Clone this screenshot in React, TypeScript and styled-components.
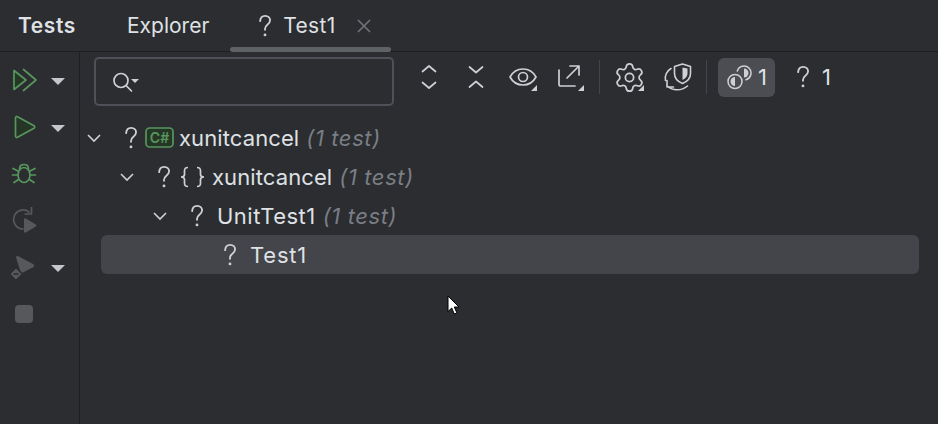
import React from 'react';
import styled, { createGlobalStyle } from 'styled-components';
import { Settings } from 'lucide-react';

const Global = createGlobalStyle`
  html, body { margin: 0; padding: 0; background: #2b2d30; }
  body { font-family: 'Inter', 'Noto Sans', sans-serif; overflow: hidden; }
`;

const Window = styled.div`
  position: relative;
  width: 938px;
  height: 424px;
  background: #2b2d30;
  color: #dfe1e5;
  display: flex;
  flex-direction: column;
  overflow: hidden;
`;

const TabBar = styled.div`
  height: 51px;
  flex: none;
  display: flex;
  align-items: stretch;
  padding-left: 18px;
  border-bottom: 1px solid #1e1f22;
  font-size: 21px;
`;

const ToolTitle = styled.div`
  font-weight: 600;
  width: 88px;
  display: flex;
  align-items: center;
  letter-spacing: 0.6px;
`;

const Tab = styled.div<{ $active?: boolean }>`
  display: flex;
  align-items: center;
  padding: 0 ${(p) => (p.$active ? '20px' : '21px')} 0 ${(p) => (p.$active ? '27px' : '21px')};
  position: relative;
  gap: 10px;
  &::after {
    content: '';
    display: ${(p) => (p.$active ? 'block' : 'none')};
    position: absolute;
    left: 0;
    right: 0;
    bottom: -1px;
    height: 5px;
    border-radius: 3px;
    background: #5f6265;
  }
`;

const TabLabel = styled.span`
  letter-spacing: 0.3px;
`;

const Body = styled.div`
  flex: 1;
  display: flex;
  min-height: 0;
`;

const SideBar = styled.div`
  width: 79px;
  flex: none;
  border-right: 1px solid #1e1f22;
  display: flex;
  flex-direction: column;
  padding-top: 5px;
`;

const SideRow = styled.div`
  height: 46.7px;
  flex: none;
  display: flex;
  align-items: center;
  padding-left: 11px;
`;

const SideCaret = styled.div`
  width: 0;
  height: 0;
  margin-left: 12px;
  border-left: 7px solid transparent;
  border-right: 7px solid transparent;
  border-top: 7px solid #c4c6cb;
  transform: translateY(1px);
`;

const Main = styled.div`
  flex: 1;
  min-width: 0;
  display: flex;
  flex-direction: column;
`;

const Toolbar = styled.div`
  height: 54px;
  flex: none;
  padding: 5px 0 0 14px;
  display: flex;
  align-items: flex-start;
`;

const SearchBox = styled.div`
  width: 300px;
  height: 49px;
  box-sizing: border-box;
  border: 2px solid #4e5157;
  border-radius: 5px;
  display: flex;
  align-items: center;
  padding-left: 15px;
  margin-right: 11px;
`;

const ToolGroup = styled.div`
  display: flex;
  align-items: center;
  height: 40px;
`;

const ToolIcon = styled.div`
  width: 47px;
  height: 40px;
  display: flex;
  align-items: center;
  justify-content: center;
  position: relative;
`;

const Corner = styled.span`
  position: absolute;
  right: 9px;
  bottom: 6px;
  width: 0;
  height: 0;
  border-left: 6px solid transparent;
  border-bottom: 6px solid #ced0d6;
`;

const Separator = styled.div`
  width: 1px;
  height: 34px;
  background: #43454a;
  margin: 0 6px;
`;

const ToggleButton = styled.div<{ $on?: boolean }>`
  height: 39px;
  width: ${(p) => (p.$on ? '57px' : 'auto')};
  box-sizing: border-box;
  padding: 0 0 0 ${(p) => (p.$on ? '9px' : '20px')};
  margin-left: ${(p) => (p.$on ? '5px' : '0')};
  border-radius: 6px;
  background: ${(p) => (p.$on ? '#4b4d52' : 'transparent')};
  display: flex;
  align-items: center;
  gap: ${(p) => (p.$on ? '6px' : '11px')};
  font-size: 22px;
`;

const Tree = styled.div`
  padding: 7px 19px 0 21px;
  display: flex;
  flex-direction: column;
`;

const Row = styled.div<{ $depth: number; $selected?: boolean }>`
  height: 39px;
  display: flex;
  align-items: center;
  padding-left: ${(p) => p.$depth * 33}px;
  border-radius: 6px;
  font-size: 22px;
  background: ${(p) => (p.$selected ? '#43454a' : 'transparent')};
`;

const ChevronSlot = styled.div`
  width: 20px;
  flex: none;
  margin-left: -17px;
  margin-right: 19px;
  display: flex;
  justify-content: center;
`;

const Name = styled.span<{ $spacing?: number; $gap?: number }>`
  white-space: nowrap;
  letter-spacing: ${(p) => p.$spacing ?? 0}px;
  margin-left: ${(p) => p.$gap ?? 0}px;
`;

const Count = styled.span`
  font-style: italic;
  color: #7a7e85;
  margin-left: 7px;
  letter-spacing: 0.6px;
  white-space: nowrap;
`;

const Pointer = styled.svg`
  position: absolute;
  left: 447px;
  top: 295px;
`;

const Question = () => (
  <svg width="16" height="26" viewBox="0 0 14 24" fill="none" style={{ flex: 'none' }}>
    <path d="M2.500 7.500C2.700 4.300 4.600 2.600 7.200 2.600c2.700 0 4.500 1.800 4.500 4.200 0 1.900-1 3-2.700 4.200-1.400 1-2 1.900-2 3.700v.8" stroke="#ced0d6" strokeWidth="1.700" strokeLinecap="round" />
    <circle cx="7" cy="20.200" r="1.300" fill="#ced0d6" />
  </svg>
);

const ChevronDown = () => (
  <svg width="16" height="10" viewBox="0 0 16 10" fill="none">
    <path d="M2 2l6 6 6-6" stroke="#ced0d6" strokeWidth="1.600" />
  </svg>
);

const Stroke = ({ w = 28, h = 28, vb = '0 0 28 28', sw = 1.7, color = '#ced0d6', children }: { w?: number; h?: number; vb?: string; sw?: number; color?: string; children: React.ReactNode }) => (
  <svg width={w} height={h} viewBox={vb} fill="none" stroke={color} strokeWidth={sw} strokeLinecap="round" strokeLinejoin="round">
    {children}
  </svg>
);

const CsBadge = () => (
  <svg width="29" height="21" viewBox="0 0 29 21" style={{ flex: 'none', marginLeft: 6, marginRight: 5 }}>
    <rect x="1" y="1" width="27" height="19" rx="3.500" fill="#253627" stroke="#57965c" strokeWidth="1.700" />
    <text x="14.500" y="15.500" textAnchor="middle" fontFamily="Inter, sans-serif" fontSize="14" fontWeight="600" fill="#57965c">C#</text>
  </svg>
);

export default function App() {
  return (
    <Window>
      <Global />
      <TabBar>
        <ToolTitle>Tests</ToolTitle>
        <Tab>Explorer</Tab>
        <Tab $active>
          <Question />
          <TabLabel>Test1</TabLabel>
          <svg width="14" height="14" viewBox="0 0 14 14" style={{ marginLeft: 11 }}>
            <path d="M1 1l12 12M13 1L1 13" stroke="#6f737a" strokeWidth="1.600" />
          </svg>
        </Tab>
      </TabBar>
      <Body>
        <SideBar>
          <SideRow>
            <Stroke color="#57965c">
              <path d="M3 4.500v19l12-9.500z" fill="#253627" />
              <path d="M12.500 3.500L25 14 12.500 24.500" />
            </Stroke>
            <SideCaret />
          </SideRow>
          <SideRow>
            <Stroke color="#57965c">
              <path d="M4.500 5v18c0 1.300 1 1.900 2 1.300L23 15.200c.9-.6.900-1.800 0-2.400L6.500 3.700C5.500 3.100 4.500 3.700 4.500 5z" fill="#253627" />
            </Stroke>
            <SideCaret />
          </SideRow>
          <SideRow>
            <Stroke color="#57965c">
              <ellipse cx="13" cy="15" rx="6" ry="7.500" />
              <path d="M8.500 9c0-3 2-4.500 4.500-4.500S17.500 6 17.500 9M7 11L2 8.500M19 11l5-2.500M6.500 15H1.500M19.500 15h5M7.500 19.500L3 22.500M18.500 19.500l4.500 3" />
            </Stroke>
          </SideRow>
          <SideRow>
            <svg width="28" height="30" viewBox="0 0 28 30" fill="none">
              <path d="M12 24a9.500 9.500 0 1 1 6-17" stroke="#56585c" strokeWidth="1.700" strokeLinecap="round" />
              <path d="M20.500 2v7h-7" stroke="#56585c" strokeWidth="1.700" strokeLinejoin="round" />
              <path d="M13 14.500c0-1 1-1.500 1.800-1l10 6c.8.500.8 1.500 0 2l-10 6c-.8.500-1.800 0-1.800-1z" fill="#56585c" />
            </svg>
          </SideRow>
          <SideRow>
            <svg width="28" height="28" viewBox="0 0 28 28" fill="none">
              <path d="M5 4.500c.3-1.200 1.400-1.700 2.400-1.200l14.700 7.700c1.300.7 1.300 2.500 0 3.200L10 20.500z" fill="#56585c" />
              <path d="M-1.500 21l6.500-6.500L11.500 21 5 27.500z" fill="#56585c" stroke="#2b2d30" strokeWidth="1.500" />
              <path d="M2.500 21h5" stroke="#2b2d30" strokeWidth="1.600" />
            </svg>
            <SideCaret />
          </SideRow>
          <SideRow>
            <svg width="28" height="28" viewBox="0 0 28 28">
              <rect x="4" y="5" width="18" height="18" rx="4" fill="#56585c" />
            </svg>
          </SideRow>
        </SideBar>
        <Main>
          <Toolbar>
            <SearchBox>
              <svg width="30" height="24" viewBox="0 0 30 24" fill="none">
                <circle cx="10" cy="10.500" r="7" stroke="#ced0d6" strokeWidth="1.700" />
                <path d="M15.500 16l5 5" stroke="#ced0d6" strokeWidth="1.700" strokeLinecap="round" />
                <path d="M20 9h8l-4 4z" fill="#ced0d6" />
              </svg>
            </SearchBox>
            <ToolGroup>
              <ToolIcon>
                <Stroke>
                  <path d="M7.500 8.500L14 3l6.500 5.500M7.500 19.500L14 25l6.500-5.500" />
                </Stroke>
              </ToolIcon>
              <ToolIcon>
                <Stroke>
                  <path d="M7.500 4L14 9.500 20.500 4M7.500 24l6.500-5.500 6.500 5.500" />
                </Stroke>
              </ToolIcon>
              <ToolIcon>
                <Stroke>
                  <path d="M1 14c3-5.500 7.500-8 13-8s10 2.500 13 8c-3 5.500-7.500 8-13 8S4 19.500 1 14z" />
                  <circle cx="14" cy="14" r="4.500" />
                </Stroke>
                <Corner />
              </ToolIcon>
              <ToolIcon>
                <Stroke>
                  <path d="M3 7v14.300c0 1 .7 1.700 1.700 1.700H19M11 15L23 3M14 3h9v9" />
                </Stroke>
                <Corner />
              </ToolIcon>
              <Separator />
              <ToolIcon>
                <Settings size={33} color="#ced0d6" strokeWidth={1.25} />
                <Corner />
              </ToolIcon>
              <ToolIcon>
                <Stroke w={30} h={30} vb="0 0 30 30" sw={1.6}>
                  <path d="M12.500 4.500L20.500 2l8 2.500v7c0 4.500-3 8-8 10-5-2-8-5.500-8-10z" />
                  <path d="M20.500 5.500v12.500c3-1.500 5-3.500 5-6.500v-5z" fill="#ced0d6" stroke="none" />
                  <path d="M9 6.500C4.500 9 2.500 14 3.500 18.500M6 24.500c4 4 13 5 19.500-.5M5 18.500v6.500h6.500" />
                </Stroke>
              </ToolIcon>
              <Separator />
              <ToggleButton $on>
                <Stroke w={25} h={25} vb="0 0 25 25" sw={1.5}>
                  <circle cx="8" cy="16.500" r="7" />
                  <path d="M8 12v9a4.500 4.500 0 0 1 0-9z" fill="#ced0d6" stroke="none" />
                  <path d="M10.300 6A7 7 0 1 1 19 14.700" />
                  <path d="M17 3.500a4.500 4.500 0 0 1 0 9z" fill="#ced0d6" stroke="none" />
                </Stroke>
                <span>1</span>
              </ToggleButton>
              <ToggleButton>
                <Question />
                <span>1</span>
              </ToggleButton>
            </ToolGroup>
          </Toolbar>
          <Tree>
            <Row $depth={0}>
              <ChevronSlot><ChevronDown /></ChevronSlot>
              <Question />
              <CsBadge />
              <Name $spacing={0.1}>xunitcancel</Name>
              <Count>(1 test)</Count>
            </Row>
            <Row $depth={1}>
              <ChevronSlot><ChevronDown /></ChevronSlot>
              <Question />
              <svg width="26" height="24" viewBox="0 0 26 24" fill="none" style={{ flex: 'none', marginLeft: 8, marginRight: 6 }}>
                <path d="M8 2.500c-3 0-3.500 1-3.500 3.500v3.500c0 1.500-1 2.500-3.500 2.500 2.500 0 3.500 1 3.500 2.500V18c0 2.500.5 3.500 3.500 3.500M17 2.500c3 0 3.500 1 3.500 3.500v3.500c0 1.500 1 2.500 3.500 2.500-2.500 0-3.500 1-3.500 2.500V18c0 2.500-.5 3.500-3.500 3.500" stroke="#ced0d6" strokeWidth="1.700" />
              </svg>
              <Name $spacing={0.1}>xunitcancel</Name>
              <Count>(1 test)</Count>
            </Row>
            <Row $depth={2}>
              <ChevronSlot><ChevronDown /></ChevronSlot>
              <Question />
              <Name $spacing={0.5} $gap={12}>UnitTest1</Name>
              <Count>(1 test)</Count>
            </Row>
            <Row $depth={3} $selected>
              <ChevronSlot />
              <Question />
              <Name $spacing={0.8} $gap={12}>Test1</Name>
            </Row>
          </Tree>
        </Main>
      </Body>
      <Pointer width="14" height="22" viewBox="0 0 14 22">
        <path d="M1 1v15.500l3.700-3.500 2.600 6 2.600-1.100-2.600-5.900H12z" fill="#fff" stroke="#000" strokeWidth="1" />
      </Pointer>
    </Window>
  );
}
